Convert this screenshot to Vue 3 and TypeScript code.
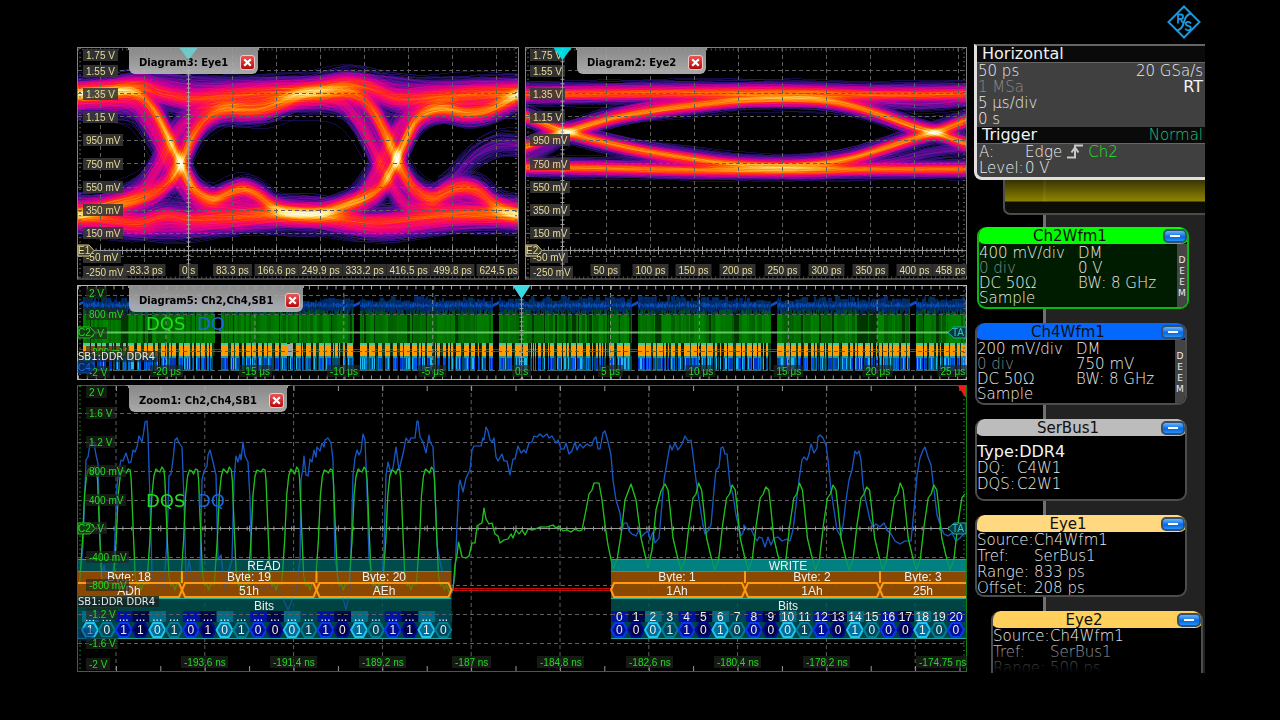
<script setup lang="ts">
import { onMounted, ref } from 'vue'

type Point = [number, number]
interface Label { x: number; y: number; t: string; w: number }
interface Bundle { n: number; s: number; pts: Point[] }
interface Rgb { at: number; c: [number, number, number] }

const charWidth = (c: string): number =>
  /[0-9npμ]/.test(c) ? 5.6 : c === 'm' ? 8.3 : c === 'V' ? 6.7 : c === 's' ? 5 : 3
const textWidth = (t: string): number => Math.ceil([...t].reduce((a, c) => a + charWidth(c), 0))
const left = (x: number, ys: number[], ts: string[]): Label[] =>
  ts.map((t, i) => ({ x, y: ys[i], t, w: textWidth(t) }))
const centred = (y: number, xs: number[], ts: string[]): Label[] =>
  ts.map((t, i) => ({ x: xs[i] - textWidth(t) / 2, y, t, w: textWidth(t) }))
const range = (n: number, start: number, step: number): number[] =>
  Array.from({ length: n }, (_, i) => start + i * step)

const eyeVolts = ['1.75 V', '1.55 V', '1.35 V', '1.15 V', '950 mV', '750 mV', '550 mV', '350 mV', '150 mV', '-50 mV', '-250 mV']
const eyeYs = [55, 71, 94, 117, 140, 164, 187, 210, 233, 257, 272]
const eyeRows = [70.5, 93.5, 116.5, 140.5, 163.5, 187.5, 210.5, 233.5, 256.5]

const eyes = [
  {
    id: 'eye1', title: 'Diagram3: Eye1', ox: 77, axis: 188.5, marker: '#6cd0d0', mark: 'E1',
    cols: range(10, 100.5, 44),
    labels: [
      ...left(86, eyeYs, eyeVolts),
      ...centred(270, [145, 189, 233, 277, 321, 365, 409, 453, 499],
        ['-83.3 ps', '0 s', '83.3 ps', '166.6 ps', '249.9 ps', '333.2 ps', '416.5 ps', '499.8 ps', '624.5 ps']),
    ],
  },
  {
    id: 'eye2', title: 'Diagram2: Eye2', ox: 525, axis: 562.5, marker: '#00e8f0', mark: 'E2',
    cols: range(9, 606.5, 44),
    labels: [
      ...left(533, eyeYs, eyeVolts),
      ...centred(270, [606, 651, 694, 738, 783, 827, 871, 915, 951],
        ['50 ps', '100 ps', '150 ps', '200 ps', '250 ps', '300 ps', '350 ps', '400 ps', '458 ps']),
    ],
  },
]

const overviewLabels: Label[] = [
  ...left(89, [293, 314, 333, 352, 372], ['2 V', '800 mV', '0 V', '-800 mV', '-2 V']),
  ...centred(371, [167, 256, 344, 433, 522, 611, 701, 789, 878, 953],
    ['-20 μs', '-15 μs', '-10 μs', '-5 μs', '0 s', '5 μs', '10 μs', '15 μs', '20 μs', '25 μs']),
]
const overviewCols = range(10, 166, 88.9)

const zoomLabels: Label[] = [
  ...left(89, [392, 413, 442, 471, 500, 528, 557, 585, 614, 643, 664],
    ['2 V', '1.6 V', '1.2 V', '800 mV', '400 mV', '0 V', '-400 mV', '-800 mV', '-1.2 V', '-1.6 V', '-2 V']),
  ...centred(662, [205, 294, 383, 472, 561, 650, 738, 827, 943],
    ['-193.6 ns', '-191.4 ns', '-189.2 ns', '-187 ns', '-184.8 ns', '-182.6 ns', '-180.4 ns', '-178.2 ns', '-174.75 ns']),
]
const zoomCols = range(10, 116, 88.8)
const zoomRows = [413.5, 442.5, 471.5, 500.5, 557.5, 585.5, 614.5, 643.5]

const toPath = (pts: Point[]): string => 'M' + pts.map((p) => p.map((v) => v.toFixed(1)).join(' ')).join('L')

const dqsPts: Point[] = []
for (let k = 0; k < 11; k++) {
  const x = 82.5 + 33.7 * k
  const shape: Point[] = [[-3, 584], [0, 540], [2, 495], [4, 476], [6, 469 + (k % 2)], [8, 471], [10, 474 - (k % 3)], [12, 467 + (k % 2) * 2],
    [14, 470], [15, 480], [17, 530], [19, 576], [21, 586], [23, 583], [25, 590], [27, 584]]
  for (const [dx, y] of shape) dqsPts.push([x + dx, y])
}
dqsPts.push([449, 592], [453, 590], [455, 565], [457, 555], [458.5, 542], [460, 548], [462, 557], [466, 558], [469, 556], [472, 543], [475, 543],
  [477, 526], [480, 524], [482, 523], [484, 508], [486, 519], [489, 524], [492, 523], [495, 534], [498, 536], [500, 543], [504, 540], [508, 539],
  [511, 534], [513, 538], [516, 530], [519, 534], [522, 530], [525, 535], [528, 529], [533, 530], [540, 527], [547, 527], [553, 525], [556, 528],
  [559, 526], [563, 531], [567, 530], [571, 532], [575, 529], [579, 531], [582, 530], [586, 510], [589, 494], [592, 490], [594, 483], [599, 483],
  [602, 500], [605, 525], [608, 545], [613, 569], [617, 560], [621, 535], [625, 500], [631, 484], [636, 500], [641, 538], [645, 555], [648, 568],
  [652, 550], [656, 510], [661, 491], [665, 484])
for (let k = 0; k < 9; k++) {
  const x = 665 + 33.6 * k
  dqsPts.push([x + 3, 490], [x + 5, 508], [x + 8, 538], [x + 12, 555], [x + 16, 570], [x + 20, 560], [x + 24, 525], [x + 28, 498], [x + 31, 494], [x + 33.6, 483 + (k % 3) * 2])
}
const dqsPath = toPath(dqsPts.filter((p) => p[0] < 966))

const dqPath = toPath([[79, 590], [83, 545], [86, 460], [88, 457], [90, 444], [92, 441], [94, 443], [96, 455], [98, 464], [100, 540], [102, 575], [104, 565], [107, 583],
  [112, 590], [114, 560], [117, 485], [119, 470], [121, 460], [123, 461], [126, 453], [129, 463], [131, 462], [133, 450], [135, 452], [137, 447], [139, 436], [142, 442],
  [144, 430], [145, 422], [147, 421], [148, 435], [150, 500], [152, 575], [156, 585], [160, 578], [164, 588], [167, 540], [169, 476], [171, 474], [173, 460], [175, 440],
  [177, 438], [179, 443], [182, 447], [184, 500], [186, 580], [189, 560], [192, 578], [195, 585], [200, 575], [202, 480], [204, 471], [207, 466], [208, 455], [210, 450],
  [213, 462], [216, 475], [218, 560], [221, 555], [225, 590], [229, 570], [232, 560], [234, 480], [236, 456], [238, 462], [240, 454], [241, 460], [243, 442], [245, 456], [248, 462],
  [250, 500], [252, 585], [262, 590], [270, 585], [280, 592], [288, 610], [296, 590], [300, 560], [301, 480], [303, 468], [304, 456], [306, 475], [308, 476], [310, 459], [312, 462],
  [314, 450], [316, 457], [317, 447], [320, 451], [322, 443], [324, 447], [325, 440], [328, 438], [331, 443], [333, 460], [335, 560], [341, 590], [346, 610], [350, 590],
  [353, 475], [355, 458], [357, 450], [359, 455], [361, 451], [363, 434], [365, 440], [367, 490], [369, 560], [375, 590], [381, 588], [384, 550], [386, 475], [388, 462],
  [391, 474], [393, 468], [396, 447], [399, 470], [402, 458], [404, 449], [406, 438], [409, 442], [411, 438], [415, 438], [417, 421], [418, 421], [420, 437], [423, 442],
  [426, 453], [429, 435], [430, 442], [433, 447], [435, 490], [437, 545], [440, 562], [443, 575], [447, 585], [452, 593], [455, 575], [457, 525], [459, 485], [460, 480],
  [463, 492], [466, 478], [470, 470], [472, 450], [474, 446], [481, 446], [483, 438], [484, 440], [486, 427], [488, 431], [490, 440], [492, 442], [494, 438], [496, 457],
  [498, 461], [502, 454], [504, 461], [507, 461], [510, 475], [513, 459], [515, 459], [518, 446], [521, 453], [524, 450], [526, 453], [529, 443], [532, 442], [534, 436],
  [537, 437], [540, 434], [543, 437], [547, 434], [549, 438], [552, 436], [556, 443], [558, 440], [561, 449], [564, 449], [566, 443], [569, 454], [572, 451], [575, 442],
  [577, 450], [580, 444], [583, 448], [587, 444], [590, 446], [592, 445], [594, 439], [596, 437], [598, 449], [600, 449], [603, 433], [605, 431], [608, 442], [611, 455],
  [613, 480], [616, 500], [620, 513], [622, 530], [624, 523], [627, 523], [629, 531], [632, 534], [636, 536], [639, 530], [641, 537], [645, 533], [648, 531], [650, 540],
  [653, 532], [655, 543], [659, 538], [661, 515], [664, 480], [667, 462], [670, 445], [672, 450], [675, 443], [678, 450], [682, 444], [685, 436], [688, 441], [691, 440],
  [693, 455], [696, 480], [699, 500], [703, 525], [705, 534], [708, 531], [711, 525], [714, 490], [716, 470], [719, 467], [721, 448], [723, 447], [725, 454], [727, 454],
  [730, 485], [733, 495], [736, 515], [739, 528], [741, 536], [743, 533], [744, 525], [748, 530], [751, 529], [755, 538], [757, 541], [759, 537], [762, 538], [765, 547],
  [768, 537], [771, 545], [774, 538], [778, 537], [782, 541], [787, 539], [790, 541], [793, 530], [796, 505], [799, 480], [802, 460], [804, 457], [807, 460], [809, 454],
  [811, 444], [814, 453], [817, 448], [818, 437], [820, 435], [823, 438], [826, 445], [828, 460], [831, 490], [834, 510], [837, 530], [841, 537], [843, 525], [846, 500],
  [849, 480], [852, 470], [855, 451], [857, 454], [859, 451], [861, 460], [863, 485], [866, 502], [870, 520], [873, 527], [876, 524], [880, 527], [884, 523], [887, 530],
  [891, 534], [895, 541], [900, 544], [905, 541], [911, 541], [914, 510], [917, 475], [920, 458], [923, 450], [925, 447], [928, 457], [931, 465], [934, 490], [937, 515],
  [941, 527], [944, 534], [948, 536], [952, 533], [956, 541], [960, 538], [965, 532]])

const tones = ['sky', 'teal', 'blue', 'navy']
const readBits = '1011010101000110101110'.split('').map((v, i) => ({ v, n: '...', x: 90 + i * 16.82, tone: tones[i % 4] }))
const writeBits = '000110100001101000100'.split('').map((v, i) => ({ v, n: String(i), x: 619.3 + i * 16.83, tone: tones[(i + 2) % 4] }))
const hexagon = (x: number): string => `${x - 8},630 ${x - 4},623 ${x + 4},623 ${x + 8},630 ${x + 4},637 ${x - 4},637`
const bursts = [
  {
    x1: 78, x2: 451.5, name: 'READ', mid: 264, bits: readBits,
    bytes: [{ n: 18, v: 'ADh', x: 129, a: 70, b: 182 }, { n: 19, v: '51h', x: 249, a: 182, b: 316.5 }, { n: 20, v: 'AEh', x: 384, a: 316.5, b: 451.5 }],
  },
  {
    x1: 611, x2: 966, name: 'WRITE', mid: 788, bits: writeBits,
    bytes: [{ n: 1, v: '1Ah', x: 677, a: 611, b: 745 }, { n: 2, v: '1Ah', x: 812, a: 745, b: 880 }, { n: 3, v: '25h', x: 923, a: 880, b: 974 }],
  },
]
const cell = (a: number, b: number): string => `M${a} 590L${a + 3} 583H${b - 3}L${b} 590L${b - 3} 597H${a + 3}Z`

const channels = [
  { name: 'Ch2Wfm1', tone: 'green', rows: [['400 mV/div', 'DM'], ['0 div', '0 V'], ['DC 50Ω', 'BW: 8 GHz'], ['Sample', '']] },
  { name: 'Ch4Wfm1', tone: 'azure', rows: [['200 mV/div', 'DM'], ['0 div', '750 mV'], ['DC 50Ω', 'BW: 8 GHz'], ['Sample', '']] },
]
const eyeCards = [
  { name: 'Eye1', tone: 'amber', rows: [['Source:', 'Ch4Wfm1'], ['Tref:', 'SerBus1'], ['Range:', '833 ps'], ['Offset:', '208 ps']] },
  { name: 'Eye2', tone: 'gold', rows: [['Source:', 'Ch4Wfm1'], ['Tref:', 'SerBus1'], ['Range:', '500 ps']] },
]

/* Persistence display: many jittered traces are counted per pixel, then the counts are coloured. */
const heat: Rgb[] = [
  { at: 0, c: [0, 0, 0] }, { at: 1, c: [22, 10, 66] }, { at: 3, c: [44, 18, 118] }, { at: 9, c: [100, 12, 156] },
  { at: 20, c: [196, 0, 150] }, { at: 44, c: [250, 8, 104] }, { at: 68, c: [255, 40, 36] }, { at: 98, c: [255, 96, 0] },
  { at: 135, c: [255, 160, 24] }, { at: 185, c: [255, 235, 140] }, { at: 240, c: [255, 255, 255] },
]
const random = (seed: number) => (): number => {
  seed = (seed + 0x6d2b79f5) | 0
  let t = Math.imul(seed ^ (seed >>> 15), 1 | seed)
  t = (t + Math.imul(t ^ (t >>> 7), 61 | t)) ^ t
  return ((t ^ (t >>> 14)) >>> 0) / 4294967296
}
const interpolate = (pts: Point[], x: number): number => {
  let i = 1
  while (i < pts.length - 1 && pts[i][0] < x) i++
  const p0 = pts[Math.max(0, i - 2)]
  const p1 = pts[i - 1]
  const p2 = pts[i]
  const p3 = pts[Math.min(pts.length - 1, i + 1)]
  const t = Math.min(1, Math.max(0, (x - p1[0]) / (p2[0] - p1[0])))
  const h = p2[0] - p1[0]
  const m1 = ((p2[1] - p0[1]) / Math.max(1, p2[0] - p0[0])) * h
  const m2 = ((p3[1] - p1[1]) / Math.max(1, p3[0] - p1[0])) * h
  const t2 = t * t
  const t3 = t2 * t
  return (2 * t3 - 3 * t2 + 1) * p1[1] + (t3 - 2 * t2 + t) * m1 + (3 * t2 - 2 * t3) * p2[1] + (t3 - t2) * m2
}

const eye1Bundles: Bundle[] = [
  { n: 1250, s: 7, pts: [[60, 94], [110, 92], [130, 92], [143, 98], [156, 114], [170, 142], [182, 167], [192, 186], [202, 195], [214, 199], [228, 193], [243, 189], [258, 195], [272, 206], [288, 212], [310, 214], [325, 212], [345, 205], [365, 198], [380, 188], [392, 168], [403, 144], [414, 123], [428, 112], [445, 109], [465, 113], [485, 111], [502, 104], [518, 95], [540, 92]] },
  { n: 1150, s: 8, pts: [[60, 216], [85, 213], [110, 206], [138, 199], [156, 191], [170, 179], [182, 158], [190, 139], [200, 124], [212, 114], [226, 109], [242, 110], [262, 109], [282, 102], [300, 94], [320, 92], [345, 92], [358, 96], [370, 107], [380, 124], [392, 150], [403, 174], [415, 190], [432, 198], [447, 191], [462, 187], [478, 191], [495, 205], [518, 214], [540, 215]] },
  { n: 950, s: 9, pts: [[60, 96], [110, 90], [140, 86], [158, 92], [190, 98], [230, 95], [270, 92], [310, 91], [345, 84], [370, 88], [395, 98], [440, 96], [480, 93], [540, 92]] },
  { n: 950, s: 9, pts: [[60, 213], [110, 219], [140, 222], [165, 216], [190, 219], [230, 217], [270, 214], [310, 213], [350, 220], [375, 222], [410, 219], [450, 215], [490, 214], [540, 215]] },
  { n: 130, s: 8, pts: [[60, 90], [120, 86], [160, 81], [200, 85], [300, 86], [350, 81], [390, 84], [430, 88], [540, 87]] },
  { n: 130, s: 7, pts: [[60, 221], [110, 227], [170, 231], [220, 226], [300, 219], [380, 231], [430, 226], [480, 220], [540, 220]] },
  { n: 420, s: 9, pts: [[60, 100], [110, 101], [135, 106], [150, 126], [162, 148], [176, 176], [198, 202], [230, 208], [280, 214], [330, 214], [352, 204], [370, 182], [384, 154], [400, 124], [425, 106], [470, 100], [540, 95]] },
  { n: 420, s: 9, pts: [[60, 208], [110, 204], [140, 190], [155, 170], [168, 146], [184, 122], [204, 108], [240, 103], [300, 98], [340, 102], [358, 120], [372, 146], [387, 176], [405, 203], [440, 208], [480, 210], [540, 215]] },
]
const lateBundle: Bundle = { n: 110, s: 9, pts: [[438, 192], [450, 182], [465, 165], [480, 152], [500, 144], [530, 145]] }
const eye2Bundles: Bundle[] = [
  { n: 880, s: 6, pts: [[500, 94], [600, 93], [700, 92], [800, 92], [880, 94], [990, 93]] },
  { n: 820, s: 5, pts: [[500, 167], [600, 168], [700, 170], [800, 170], [880, 169], [990, 169]] },
  { n: 950, s: 5, pts: [[500, 154], [526, 146], [545, 138], [567, 131], [590, 124], [620, 116], [660, 109], [700, 104], [740, 100], [780, 99], [820, 100], [850, 105], [880, 114], [910, 125], [937, 133], [966, 143], [990, 150]] },
  { n: 950, s: 5, pts: [[500, 108], [526, 116], [545, 124], [567, 132], [600, 141], [640, 150], [690, 158], [730, 163], [780, 165], [820, 163], [850, 158], [880, 149], [910, 139], [937, 131], [966, 120], [990, 112]] },
  { n: 70, s: 5, pts: [[500, 166], [540, 152], [580, 128], [620, 110], [680, 99], [740, 95], [840, 97], [900, 104], [940, 104], [990, 98]] },
  { n: 70, s: 5, pts: [[500, 164], [600, 166], [700, 170], [800, 172], [860, 166], [900, 158], [937, 150], [990, 146]] },
]

const W = 442
const H = 233
function drawEye(canvas: HTMLCanvasElement, ox: number, bundles: Bundle[], seed: number): void {
  const ctx = canvas.getContext('2d')
  if (!ctx) return
  const rnd = random(seed)
  const gauss = (): number => (rnd() + rnd() + rnd() - 1.5) * 2
  const hits = new Float32Array(W * H)
  for (const b of bundles) {
    const from = Math.max(1, Math.ceil(b.pts[0][0] - ox))
    const table = Array.from({ length: W + 40 }, (_, i) => interpolate(b.pts, i - 20 + ox))
    for (let k = 0; k < b.n; k++) {
      const u = gauss() * (0.3 + 0.65 * rnd())
      const shift = gauss() * b.s * 0.4
      const f = 0.015 + rnd() * 0.04
      const ph = rnd() * 6.28
      const amp = 0.35 * rnd() * b.s
      let prev = NaN
      for (let x = from; x < W - 1; x++) {
        const q = Math.min(W + 38, Math.max(0, x + 20 + shift))
        const i = Math.floor(q)
        const base = table[i] + (table[i + 1] - table[i]) * (q - i)
        const y = Math.round(base - 47 + u * b.s + amp * Math.sin(f * x + ph))
        let lo = y
        let hi = y
        if (prev < y) lo = prev + 1
        if (prev > y) hi = prev - 1
        for (let v = lo; v <= hi; v++) if (v > 0 && v < H) hits[v * W + x] += 1
        prev = y
      }
    }
  }
  const img = ctx.createImageData(W, H)
  for (let y = 0; y < H; y++) {
    for (let x = 0; x < W; x++) {
      const p = y * W + x
      const d = Math.min(239.9, hits[p])
      let j = 1
      while (heat[j].at < d) j++
      const a = heat[j - 1]
      const z = heat[j]
      const t = (d - a.at) / (z.at - a.at)
      for (let c = 0; c < 3; c++) img.data[p * 4 + c] = a.c[c] + (z.c[c] - a.c[c]) * t
      img.data[p * 4 + 3] = 255
    }
  }
  ctx.putImageData(img, 0, 0)
}

function drawOverview(canvas: HTMLCanvasElement): void {
  const ctx = canvas.getContext('2d')
  if (!ctx) return
  const rnd = random(77)
  ctx.fillStyle = '#000'
  ctx.fillRect(0, 0, 890, 95)
  const bar = (x: number, y1: number, y2: number, colour: string): void => {
    ctx.fillStyle = colour
    ctx.fillRect(x, y1, 1, y2 - y1)
  }
  let active = true
  let run = 6
  let jump = 12
  let green = 120
  for (let x = 2; x < 889; x++) {
    const phase = (((x + 77 - 215) % 138.8) + 138.8) % 138.8
    if (phase < 6) {
      bar(x, 19 - phase / 2, 22 - phase / 2, '#0a50c8')
      bar(x, 64, 65, '#c01010')
      bar(x, 66, 67, '#c01010')
      active = true
      run = 8
      continue
    }
    if (rnd() < 0.4) jump = 11 + rnd() * 6
    bar(x, jump, 25 + rnd() * 5, `rgb(0,${34 + rnd() * 16},${84 + rnd() * 34})`)
    bar(x, 17 + rnd() * 3, 21 + rnd() * 2, rnd() < 0.5 ? '#084cb4' : '#063c90')
    if (rnd() < 0.5) green = rnd() < 0.16 ? 55 : 92 + rnd() * 42
    bar(x, 24 + rnd() * 5, 32, `rgb(0,${green * 0.7},${20 + rnd() * 30})`)
    bar(x, 30, 60, `rgb(0,${green},0)`)
    if (--run <= 0) {
      active = !active
      run = active ? 1 + Math.floor(rnd() * 6) : 1 + Math.floor(rnd() * 3)
    }
    if (active) {
      bar(x, 58, 61, '#40c8a0')
      bar(x, 60, 71, '#ff9a00')
      bar(x, 71, 73, '#209c98')
      bar(x, 73, 85, ['#0030d0', '#0074d8', '#20b8e8', '#004890', '#0050e8'][Math.floor(rnd() * 5)])
      bar(x, 84, 86, '#107c80')
    } else {
      bar(x, 58, 71, rnd() < 0.5 ? '#101c00' : '#103c18')
      bar(x, 64, 65, '#d02000')
      bar(x, 66, 67, '#d02000')
      if (rnd() < 0.5) bar(x, 71, 86, '#04484c')
    }
  }
  ctx.fillStyle = '#a8a8a0'
  ctx.fillRect(210, 59, 6, 12)
}

const eyeCanvas = ref<HTMLCanvasElement[]>([])
const overviewCanvas = ref<HTMLCanvasElement | null>(null)
onMounted(() => {
  drawEye(eyeCanvas.value[0], 77, [...eye1Bundles, lateBundle], 11)
  drawEye(eyeCanvas.value[1], 525, eye2Bundles, 29)
  if (overviewCanvas.value) drawOverview(overviewCanvas.value)
})
</script>

<template>
  <div class="screen">
    <header class="brand">
      <svg class="logo" viewBox="0 0 34 34" role="img" aria-label="R&amp;S">
        <path d="M17 1.5L32.5 17L17 32.5L1.5 17Z" />
        <path d="M9.5 25.500Q15 25 17 17Q19 9 24.500 8.500" />
        <path class="thin" d="M11 18.500V9.500H14Q16 9.500 16 11.800Q16 14 14 14H11M13.500 14L16 18" />
        <path class="thin" d="M24 18.500Q23 16.800 21 16.800Q18.800 16.800 18.800 18.700Q18.800 20.500 21.200 20.800Q23.800 21.200 23.800 23.300Q23.800 25.300 21.200 25.300Q19 25.300 18.300 23.500" />
      </svg>
    </header>

    <div class="content">
      <main class="plots">
        <div class="eyes">
          <section v-for="e in eyes" :key="e.id" class="plot">
            <canvas ref="eyeCanvas" class="layer" width="442" height="233"></canvas>
            <svg class="layer" :viewBox="`${e.ox} 47 442 233`">
              <path v-for="x in e.cols" :key="'c' + x" class="grid" :d="`M${x} 48V279`" />
              <path v-for="y in eyeRows" :key="'r' + y" class="grid" :d="`M${e.ox + 1} ${y}H${e.ox + 441}`" />
              <path class="axis" :d="`M${e.ox + 1} 250.500H${e.ox + 441}M${e.axis} 48V279`" />
              <path class="ticks small" :d="`M${e.ox + 1} 250.500H${e.ox + 441}M${e.axis} 48V279`" />
              <path class="ticks big" :d="`M${e.ox + 1} 250.500H${e.ox + 441}`" />
              <path class="ticks edge" :d="`M${e.ox + 1} 49.500H${e.ox + 441}M${e.ox + 1} 277.500H${e.ox + 441}M${e.ox + 439} 48V279M${e.ox + 3} 48V279`" />
              <rect class="frame" :x="e.ox + 0.5" y="47.500" width="441" height="231.500" />
              <g v-for="l in e.labels" :key="l.t">
                <rect class="label-box" :x="l.x - 3" :y="l.y - 6" :width="l.w + 5" height="12" />
                <text class="tick-label sand" :x="l.x" :y="l.y + 4">{{ l.t }}</text>
              </g>
              <path class="tag-eye" :d="`M${e.ox + 1} 245H${e.ox + 12}L${e.ox + 17} 250.500L${e.ox + 12} 256H${e.ox + 1}Z`" />
              <text class="tick-label sand" :x="e.ox + 1" y="254">{{ e.mark }}</text>
              <path :d="`M${e.axis} 48V278`" stroke="#aaa" stroke-opacity="0.600" />
            </svg>
            <div class="tab">
              <span>{{ e.title }}</span>
              <button class="close" type="button" :aria-label="`Close ${e.title}`"><svg viewBox="0 0 10 10"><path d="M2 2L8 8M8 2L2 8" /></svg></button>
            </div>
            <svg class="layer over" :viewBox="`${e.ox} 47 442 233`" aria-hidden="true">
              <path :d="`M${e.axis - 9} 48H${e.axis + 9}L${e.axis} 60Z`" :fill="e.marker" />
            </svg>
          </section>
        </div>

        <section class="plot">
          <canvas ref="overviewCanvas" class="layer" width="890" height="95"></canvas>
          <svg class="layer" viewBox="77 285 890 95">
            <path v-for="x in overviewCols" :key="x" class="grid light" :d="`M${x} 286V379`" />
            <path v-for="y in [295.5, 314.5, 351.5, 370.5]" :key="y" class="grid" :d="`M78 ${y}H966`" />
            <path d="M78 332.500H966" stroke="#7ad07a" stroke-width="2" stroke-opacity="0.850" />
            <path class="axis" d="M521.500 286V379" />
            <path class="ticks small" d="M521.500 286V379" />
            <path class="ticks wide" d="M78 287.500H966M78 377.500H966" />
            <path class="ticks edge" d="M964 286V379M80 286V379" />
            <rect class="frame bright" x="77.500" y="285.500" width="889" height="94" />
            <g v-for="l in overviewLabels" :key="l.t">
              <rect class="label-box faint" :x="l.x - 3" :y="l.y - 6" :width="l.w + 5" height="12" />
              <text class="tick-label lime" :x="l.x" :y="l.y + 4">{{ l.t }}</text>
            </g>
            <path class="tag-green" d="M78 327H90L95 332.500L90 338H78Z" />
            <text class="tick-label lime" x="78" y="336">C2</text>
            <path class="tag-blue" d="M78 361H90L95 367L90 373H78Z" />
            <text class="tick-label azure-text" x="78" y="371">C4</text>
            <rect class="label-box faint" x="78" y="351" width="81" height="11" />
            <text class="bus-label" x="78" y="360">SB1:DDR DDR4</text>
            <text class="signal lime" x="146" y="330">DQS</text>
            <text class="signal azure-text" x="197" y="330">DQ</text>
            <path class="tag-cyan" d="M966 327H954L948 332.500L954 338H966Z" />
            <text class="tick-label cyan" x="952" y="336">TA</text>
            <path d="M513 286H530L521.500 299Z" fill="#3cd8e0" />
          </svg>
          <div class="tab">
            <span>Diagram5: Ch2,Ch4,SB1</span>
            <button class="close" type="button" aria-label="Close Diagram5"><svg viewBox="0 0 10 10"><path d="M2 2L8 8M8 2L2 8" /></svg></button>
          </div>
        </section>

        <section class="plot">
          <svg class="layer" viewBox="77 385 890 287">
            <path v-for="x in zoomCols" :key="x" class="grid" :d="`M${x} 386V671`" />
            <path v-for="y in zoomRows" :key="y" class="grid" :d="`M78 ${y}H966`" />
            <path class="axis" d="M78 528.500H966" />
            <path class="ticks wide" d="M78 528.500H966" />
            <path class="ticks coarse" d="M71.500 528.500H966M71.500 388H966M71.500 669H966" />
            <path class="ticks edge green-edge" d="M80 386V671M964 386V671" />
            <path class="trace dq" :d="dqPath" />
            <path class="trace dqs" :d="dqsPath" />
            <path d="M451 588.500H611M451 590.500H611" stroke="#c40c0c" />
            <g v-for="b in bursts" :key="b.name">
              <rect :class="b.name === 'WRITE' ? 'head-strong' : 'head'" :x="b.x1" y="559" :width="b.x2 - b.x1" height="12" />
              <path class="teal-line" :d="`M${b.x1} 559.500H${b.x2}M${b.x1} 638.500H${b.x2}`" />
              <rect class="byte-bar" :x="b.x1" y="571" :width="b.x2 - b.x1" height="27" />
              <path :d="`M${b.x1} 571.500H${b.x2}`" stroke="#8a8420" />
              <path :d="`M${b.x1} 598.500H${b.x2}`" stroke="#28b0a0" />
              <rect class="bits-bar" :x="b.x1" y="599" :width="b.x2 - b.x1" height="39" />
            </g>
            <g class="ghost">
              <path class="trace dq" :d="dqPath" />
              <path class="trace dqs" :d="dqsPath" />
            </g>
            <g v-for="b in bursts" :key="b.mid">
              <text class="decode" :x="b.mid" y="570">{{ b.name }}</text>
              <text class="decode" :x="b.mid" y="610">Bits</text>
              <g v-for="y in b.bytes" :key="y.n">
                <text class="decode" :x="y.x" y="581">Byte: {{ y.n }}</text>
                <path class="byte-cell" :d="cell(y.a, y.b)" />
                <path v-if="y.b < b.x2 - 1" :d="`M${y.b} 571V583`" stroke="#ff9a10" stroke-width="2" />
                <text class="decode" :x="y.x" y="595">{{ y.v }}</text>
              </g>
              <g v-for="(k, i) in b.bits" :key="i" :class="k.tone">
                <rect class="bit-head" :x="k.x - 8" y="611" width="17" height="11" />
                <polygon class="bit" :points="hexagon(k.x)" />
                <text class="decode" :x="k.x" y="621">{{ k.n }}</text>
                <text class="decode" :x="k.x" y="634">{{ k.v }}</text>
              </g>
            </g>
            <path class="grid" d="M78 614.500H451M611 614.500H966" />
            <rect class="frame green-frame" x="77.500" y="385.500" width="889" height="286" />
            <g v-for="l in zoomLabels" :key="l.t">
              <rect class="label-box faint" :x="l.x - 3" :y="l.y - 6" :width="l.w + 5" height="12" />
              <text class="tick-label lime" :x="l.x" :y="l.y + 4">{{ l.t }}</text>
            </g>
            <path class="tag-green" d="M78 523H90L95 528.500L90 534H78Z" />
            <text class="tick-label lime" x="78" y="532">C2</text>
            <path class="tag-blue see-through" d="M78 628H90L95 634L90 640H78Z" />
            <rect x="78" y="596" width="81" height="11" fill="#142424" fill-opacity="0.850" />
            <text class="bus-label" x="78" y="605">SB1:DDR DDR4</text>
            <text class="signal lime" x="146" y="507">DQS</text>
            <text class="signal azure-text" x="197" y="507">DQ</text>
            <path class="tag-cyan" d="M966 523H954L948 528.500L954 534H966Z" />
            <text class="tick-label cyan" x="952" y="532">TA</text>
            <path d="M958 386H966V398Z" fill="#ff1414" />
          </svg>
          <div class="tab">
            <span>Zoom1: Ch2,Ch4,SB1</span>
            <button class="close" type="button" aria-label="Close Zoom1"><svg viewBox="0 0 10 10"><path d="M2 2L8 8M8 2L2 8" /></svg></button>
          </div>
        </section>
      </main>

      <aside class="side">
        <section class="status">
          <h2><span>Horizontal</span></h2>
          <div class="status-rows">
            <p><span>50 ps</span><span>20 GSa/s</span></p>
            <p><span class="dim">1 MSa</span><span class="strong">RT</span></p>
            <p>5 μs/div</p>
            <p>0 s</p>
          </div>
          <h2><span>Trigger</span><span class="mode">Normal</span></h2>
          <div class="trigger-rows">
            <span>A:</span>
            <span class="edge">Edge
              <svg viewBox="0 0 16 15"><path d="M0 13.500H8V1.500H16M4.500 8.500L8 3.500L11.500 8.500" /></svg>
              <b>Ch2</b></span>
            <span>Level:</span><span>0 V</span>
          </div>
        </section>

        <div class="stack">
          <div class="folded"></div>

          <section v-for="c in channels" :key="c.name" class="card" :class="c.tone">
            <h3><span>{{ c.name }}</span><button class="minimise" type="button" :aria-label="`Minimise ${c.name}`"><i></i></button></h3>
            <div class="channel">
              <div class="channel-rows">
                <template v-for="(r, i) in c.rows" :key="i">
                  <span :class="{ dim: i === 1 }">{{ r[0] }}</span><span>{{ r[1] }}</span>
                </template>
              </div>
              <div class="deem"><span>D</span><span>E</span><span>E</span><span>M</span></div>
            </div>
          </section>

          <section class="card silver">
            <h3><span>SerBus1</span><button class="minimise" type="button" aria-label="Minimise SerBus1"><i></i></button></h3>
            <div class="bus-rows">
              <span class="strong wide">Type:DDR4</span>
              <span>DQ:</span><span>C4W1</span>
              <span>DQS:</span><span>C2W1</span>
            </div>
          </section>

          <section v-for="c in eyeCards" :key="c.name" class="card" :class="c.tone">
            <h3><span>{{ c.name }}</span><button class="minimise" type="button" :aria-label="`Minimise ${c.name}`"><i></i></button></h3>
            <div class="eye-rows">
              <template v-for="r in c.rows" :key="r[0]"><span>{{ r[0] }}</span><span>{{ r[1] }}</span></template>
            </div>
          </section>
        </div>
      </aside>
    </div>
  </div>
</template>

<style>
html,
body {
  background: #000;
}
</style>

<style scoped>
.screen {
  box-sizing: border-box;
  min-height: 100vh;
  padding: 0 75px 48px 77px;
  background: #000;
  color: #ececec;
  font-family: "DejaVu Sans", sans-serif;
  overflow: hidden;
}
.brand {
  display: flex;
  justify-content: flex-end;
  height: 39px;
  padding: 5px 4px 0 0;
}
.logo {
  width: 34px;
  height: 34px;
}
.logo path {
  fill: none;
  stroke: #1c96dc;
  stroke-width: 2;
}
.logo .thin {
  stroke-width: 1.8;
}
.content {
  display: grid;
  grid-template-columns: minmax(0, 890fr) minmax(0, 231fr);
  gap: 7px;
}
.plots {
  display: flex;
  flex-direction: column;
  gap: 5px;
  padding-top: 3px;
}
.eyes {
  display: grid;
  grid-template-columns: 1fr 1fr;
  gap: 6px;
}
.plot {
  position: relative;
  display: grid;
}
.layer {
  grid-area: 1 / 1;
  display: block;
  width: 100%;
}
.over {
  z-index: 1;
  opacity: 0.9;
  pointer-events: none;
}
.tab {
  position: absolute;
  top: 0;
  left: 52px;
  display: flex;
  align-items: center;
  gap: 12px;
  height: 27px;
  padding: 3px 3px 0 10px;
  box-sizing: border-box;
  border-radius: 0 0 6px 6px;
  background: linear-gradient(rgba(150, 150, 150, 0.9), rgba(184, 184, 184, 0.92));
  color: #000;
  font-size: 10px;
  font-weight: 700;
  white-space: nowrap;
}
.tab::before,
.tab::after {
  content: "";
  position: absolute;
  top: 0;
  width: 5px;
  height: 5px;
}
.tab::before {
  right: 100%;
  background: radial-gradient(circle at 0 100%, transparent 5px, #999 5px);
}
.tab::after {
  left: 100%;
  background: radial-gradient(circle at 100% 100%, transparent 5px, #999 5px);
}
.close {
  width: 15px;
  height: 15px;
  padding: 1px;
  border: 1px solid #f4c8c8;
  border-radius: 3px;
  background: linear-gradient(#e85858, #b80808);
}
.close svg {
  display: block;
  width: 11px;
  height: 11px;
}
.close path {
  fill: none;
  stroke: #fff;
  stroke-width: 2;
}

.grid,
.axis,
.ticks,
.frame,
.trace {
  fill: none;
}
.grid {
  stroke: #606060;
  stroke-dasharray: 4 3;
}
.grid.light {
  stroke: #8a8a8a;
}
.axis {
  stroke: #9a9a9a;
}
.ticks {
  stroke: #9a9a9a;
}
.ticks.small {
  stroke-width: 4;
  stroke-dasharray: 1 3.4;
}
.ticks.big {
  stroke-width: 8;
  stroke-dasharray: 1 21;
}
.ticks.edge {
  stroke-width: 2;
  stroke-dasharray: 1 3.4;
  stroke: #585858;
}
.ticks.wide {
  stroke-width: 4;
  stroke-dasharray: 1 7.88;
}
.ticks.coarse {
  stroke-width: 6;
  stroke-dasharray: 1 43.4;
}
.ticks.green-edge {
  stroke: #1c6c1c;
}
.frame {
  stroke: #808080;
}
.frame.bright {
  stroke: #b8b8b8;
}
.frame.green-frame {
  stroke: #148014;
}
.label-box {
  fill: #383838;
  fill-opacity: 0.88;
}
.label-box.faint {
  fill: #202820;
  fill-opacity: 0.66;
}
.tick-label {
  font: 10px "Liberation Sans", sans-serif;
}
.sand {
  fill: #e8dc98;
}
.lime {
  fill: #20dc20;
}
.azure-text {
  fill: #1868d8;
}
.cyan {
  fill: #30c8d0;
}
.bus-label {
  font: 10px "DejaVu Sans", sans-serif;
  fill: #e8e8e8;
}
.signal {
  font: 18px "DejaVu Sans", sans-serif;
}
.tag-eye {
  fill: #3c3828;
  stroke: #d8cc88;
}
.tag-green {
  fill: #0c400c;
  stroke: #20c020;
}
.tag-blue {
  fill: #062860;
  stroke: #0c50a8;
}
.see-through {
  opacity: 0.5;
}
.tag-cyan {
  fill: #06383c;
  stroke: #28a8b0;
}
.trace {
  stroke-width: 1.2;
  stroke-linejoin: round;
}
.dq {
  stroke: #1858c4;
}
.dqs {
  stroke: #20c41c;
}
.ghost {
  opacity: 0.4;
}
.head {
  fill: #006c6c;
  fill-opacity: 0.7;
}
.head-strong {
  fill: #008080;
}
.teal-line {
  stroke: #28a0a0;
}
.byte-bar {
  fill: #944c00;
  fill-opacity: 0.94;
}
.byte-cell {
  fill: none;
  stroke: #ff9a10;
  stroke-width: 2;
}
.bits-bar {
  fill: #005454;
  fill-opacity: 0.8;
}
.decode {
  font: 12px "Liberation Sans", sans-serif;
  fill: #f0f0f0;
  text-anchor: middle;
}
.sky .bit-head { fill: #006c88; }
.teal .bit-head { fill: #004454; }
.blue .bit-head { fill: #0014a0; }
.navy .bit-head { fill: #000848; }
.bit { stroke-width: 2; }
.sky .bit { fill: #006c98; stroke: #20c4f0; }
.teal .bit { fill: #00485c; stroke: #007c94; }
.blue .bit { fill: #001090; stroke: #0838f0; }
.navy .bit { fill: #000048; stroke: #000c90; }

.side {
  display: flex;
  flex-direction: column;
  font-size: 15px;
  font-weight: 200;
  line-height: 16px;
  white-space: nowrap;
}
.status {
  border-top: 2px solid #666;
  border-left: 3px solid #e0e0e0;
  border-bottom: 3px solid #e0e0e0;
  border-bottom-left-radius: 8px;
  background: #404040;
}
h2,
h3,
p {
  margin: 0;
  font-size: 15px;
}
h2 {
  display: flex;
  justify-content: space-between;
  padding: 0 2px 0 5px;
  border-bottom: 1px solid #666;
  background: #0a0a0a;
  color: #f0f0f0;
  font-size: 16px;
  font-weight: 400;
}
.mode {
  color: #20c47c;
  font-size: 15px;
  font-weight: 200;
}
.status-rows p {
  display: flex;
  justify-content: space-between;
  padding: 0 2px 0 1px;
}
.trigger-rows {
  display: grid;
  grid-template-columns: 46px 1fr;
  padding: 0 0 1px 2px;
}
.edge {
  display: flex;
  gap: 5px;
}
.edge svg {
  width: 16px;
  height: 15px;
}
.edge path {
  fill: none;
  stroke: #c8c8c8;
  stroke-width: 2;
}
.edge b {
  color: #20e820;
  font-weight: 200;
}
.dim {
  color: #8c8c8c;
}
.strong {
  color: #f4f4f4;
  font-size: 16px;
  font-weight: 400;
}
.stack {
  flex: 1;
  background: linear-gradient(to right, transparent 69px, #707070 69px, #707070 72px, #222 72px);
}
.folded {
  height: 33px;
  margin: 0 0 12px 29px;
  border: 2px solid #4c4c4c;
  border-width: 0 0 2px 2px;
  border-bottom-left-radius: 7px;
  background: linear-gradient(rgba(60, 56, 0, 0.9), rgba(150, 140, 0, 0.92) 21px, #0c0c00 22px, #0c0c0c);
}
.card {
  display: flex;
  flex-direction: column;
  box-sizing: border-box;
  height: 82px;
  margin: 0 18px 14px 1px;
  border: 2px solid #4c4c4c;
  border-top: 0;
  border-radius: 9px;
  background: #000;
  overflow: hidden;
}
h3 {
  display: flex;
  flex: none;
  align-items: center;
  height: 17px;
  margin: 0 -2px;
  padding: 0 2px 0 0;
  border-radius: 9px 9px 8px 8px;
  color: #101010;
  font-weight: 400;
}
h3 span {
  flex: 1;
  text-align: center;
}
.minimise {
  display: grid;
  place-items: center;
  width: 24px;
  height: 14px;
  padding: 0;
  border: 2px solid #35506c;
  border-radius: 5px;
  background: linear-gradient(#68b4ff, #0468e0 60%, #2890ff);
}
.minimise i {
  width: 10px;
  height: 2px;
  background: #fff;
}
.green {
  margin-right: 16px;
  margin-left: 3px;
  border-color: #0cb80c;
  background: #001c00;
}
.green h3 { background: #00ff00; }
.azure h3 { background: #0468ff; }
.silver h3 { background: #bcbcbc; }
.amber h3 { background: #ffd880; }
.gold h3 { background: #ffd05c; }
.channel {
  display: flex;
  flex: 1;
}
.channel-rows {
  display: grid;
  flex: 1;
  grid-template-columns: 99px 1fr;
  grid-auto-rows: 15px;
  align-content: start;
  padding-top: 1px;
}
.deem {
  display: flex;
  flex-direction: column;
  align-items: center;
  width: 10px;
  padding-top: 11px;
  box-sizing: border-box;
  background: #444;
  font-size: 9px;
  font-weight: 400;
  line-height: 11px;
}
.bus-rows {
  display: grid;
  grid-template-columns: 40px 1fr;
  padding-top: 8px;
}
.wide {
  grid-column: 1 / 3;
}
.eye-rows {
  display: grid;
  grid-template-columns: 57px 1fr;
}
.gold {
  position: relative;
  height: 62px;
  margin: 0 2px 0 17px;
  border-bottom: 0;
  border-bottom-right-radius: 0;
  border-bottom-left-radius: 0;
}
.gold::after {
  content: "";
  position: absolute;
  inset: 17px -2px 0;
  background: linear-gradient(transparent 10px, #000);
}
</style>
